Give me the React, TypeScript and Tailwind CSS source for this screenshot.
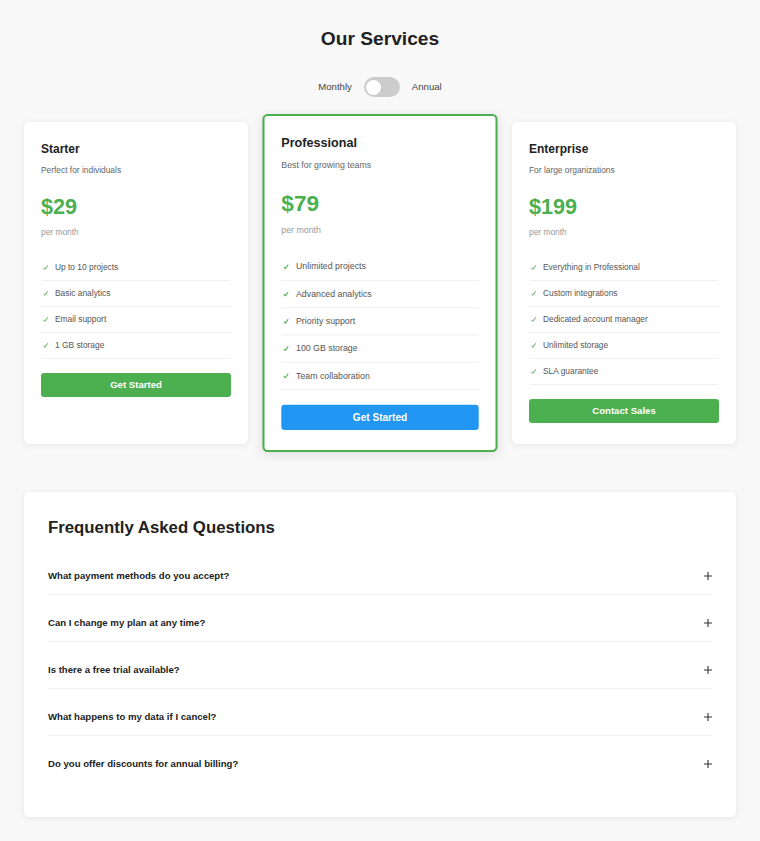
import React from "react";

type Plan = {
  name: string;
  desc: string;
  price: string;
  features: string[];
  cta: string;
  featured?: boolean;
};

const plans: Plan[] = [
  {
    name: "Starter",
    desc: "Perfect for individuals",
    price: "$29",
    features: ["Up to 10 projects", "Basic analytics", "Email support", "1 GB storage"],
    cta: "Get Started",
  },
  {
    name: "Professional",
    desc: "Best for growing teams",
    price: "$79",
    features: [
      "Unlimited projects",
      "Advanced analytics",
      "Priority support",
      "100 GB storage",
      "Team collaboration",
    ],
    cta: "Get Started",
    featured: true,
  },
  {
    name: "Enterprise",
    desc: "For large organizations",
    price: "$199",
    features: [
      "Everything in Professional",
      "Custom integrations",
      "Dedicated account manager",
      "Unlimited storage",
      "SLA guarantee",
    ],
    cta: "Contact Sales",
  },
];

const faqs = [
  "What payment methods do you accept?",
  "Can I change my plan at any time?",
  "Is there a free trial available?",
  "What happens to my data if I cancel?",
  "Do you offer discounts for annual billing?",
];

function Check() {
  return (
    <svg width="5" height="5" viewBox="0 0 5 5" className="ml-[2px] mr-[7px] shrink-0">
      <path d="M0.5 2.9 L1.8 4.3 L4.5 0.6" fill="none" stroke="#4caf50" strokeWidth="1" strokeLinecap="round" strokeLinejoin="round" />
    </svg>
  );
}

function PlanCard({ plan }: { plan: Plan }) {
  const base = plan.featured
    ? "border-2 border-[#4caf50] pt-[18px] pb-[19px] scale-105 shadow-[0_2px_10px_rgba(0,0,0,0.1)]"
    : "border border-transparent pt-[19px] pb-[20px] shadow-[0_1px_6px_rgba(0,0,0,0.08)]";
  return (
    <div className={`bg-white rounded-[5px] px-[16px] ${base}`}>
      <h3 className="text-[12px] leading-[14px] font-bold text-[#222]">{plan.name}</h3>
      <p className="mt-[8px] text-[8.4px] leading-[13px] text-[#666]">{plan.desc}</p>
      <div className="mt-[17px] text-[21.6px] leading-[26px] font-bold text-[#4caf50]">{plan.price}</div>
      <div className="mt-[6px] text-[8.4px] leading-[13px] text-[#999]">per month</div>
      <ul className="mt-[16px]">
        {plan.features.map((f) => (
          <li key={f} className="h-[26px] flex items-center border-b border-[#f0f0f0] text-[8.4px] text-[#555]">
            <Check />
            <span>{f}</span>
          </li>
        ))}
      </ul>
      <button
        className={`mt-[14px] w-full h-[24px] rounded-[3px] text-white text-[9.6px] font-bold ${
          plan.featured ? "bg-[#2196f3]" : "bg-[#4caf50]"
        }`}
      >
        {plan.cta}
      </button>
    </div>
  );
}

export default function App() {
  return (
    <div
      className="min-h-screen bg-[#f8f8f8] px-[24px] pt-[27px] pb-[24px]"
      style={{ fontFamily: "'Liberation Sans', Arial, sans-serif" }}
    >
      <h1 className="text-center text-[19.2px] leading-[23px] font-bold text-[#222]">Our Services</h1>

      <div className="mt-[27px] h-[20px] flex items-center justify-center gap-[12px] text-[9.6px] text-[#444]">
        <span>Monthly</span>
        <div className="relative w-[36px] h-[20px] rounded-full bg-[#ccc]">
          <div className="absolute left-[2.5px] top-[2.5px] w-[15px] h-[15px] rounded-full bg-white" />
        </div>
        <span>Annual</span>
      </div>

      <div className="mt-[25px] grid grid-cols-3 gap-[20px]">
        {plans.map((p) => (
          <PlanCard key={p.name} plan={p} />
        ))}
      </div>

      <div className="mt-[48px] bg-white rounded-[5px] shadow-[0_1px_6px_rgba(0,0,0,0.08)] px-[24px] pt-[24px] pb-[35px]">
        <h2 className="text-[16.8px] leading-[24px] font-bold text-[#222]">Frequently Asked Questions</h2>
        <div className="mt-[8px]">
          {faqs.map((q, i) => (
            <div
              key={q}
              className={`pt-[21px] pb-[11px] flex items-center justify-between ${
                i < faqs.length - 1 ? "border-b border-[#f0f0f0]" : ""
              }`}
            >
              <span className="text-[9.6px] leading-[14px] font-bold text-[#222]">{q}</span>
              <svg width="8" height="8" viewBox="0 0 8 8" className="mr-[0.5px]">
                <path d="M4 0 V8 M0 4 H8" stroke="#333" strokeWidth="1.1" />
              </svg>
            </div>
          ))}
        </div>
      </div>
    </div>
  );
}
